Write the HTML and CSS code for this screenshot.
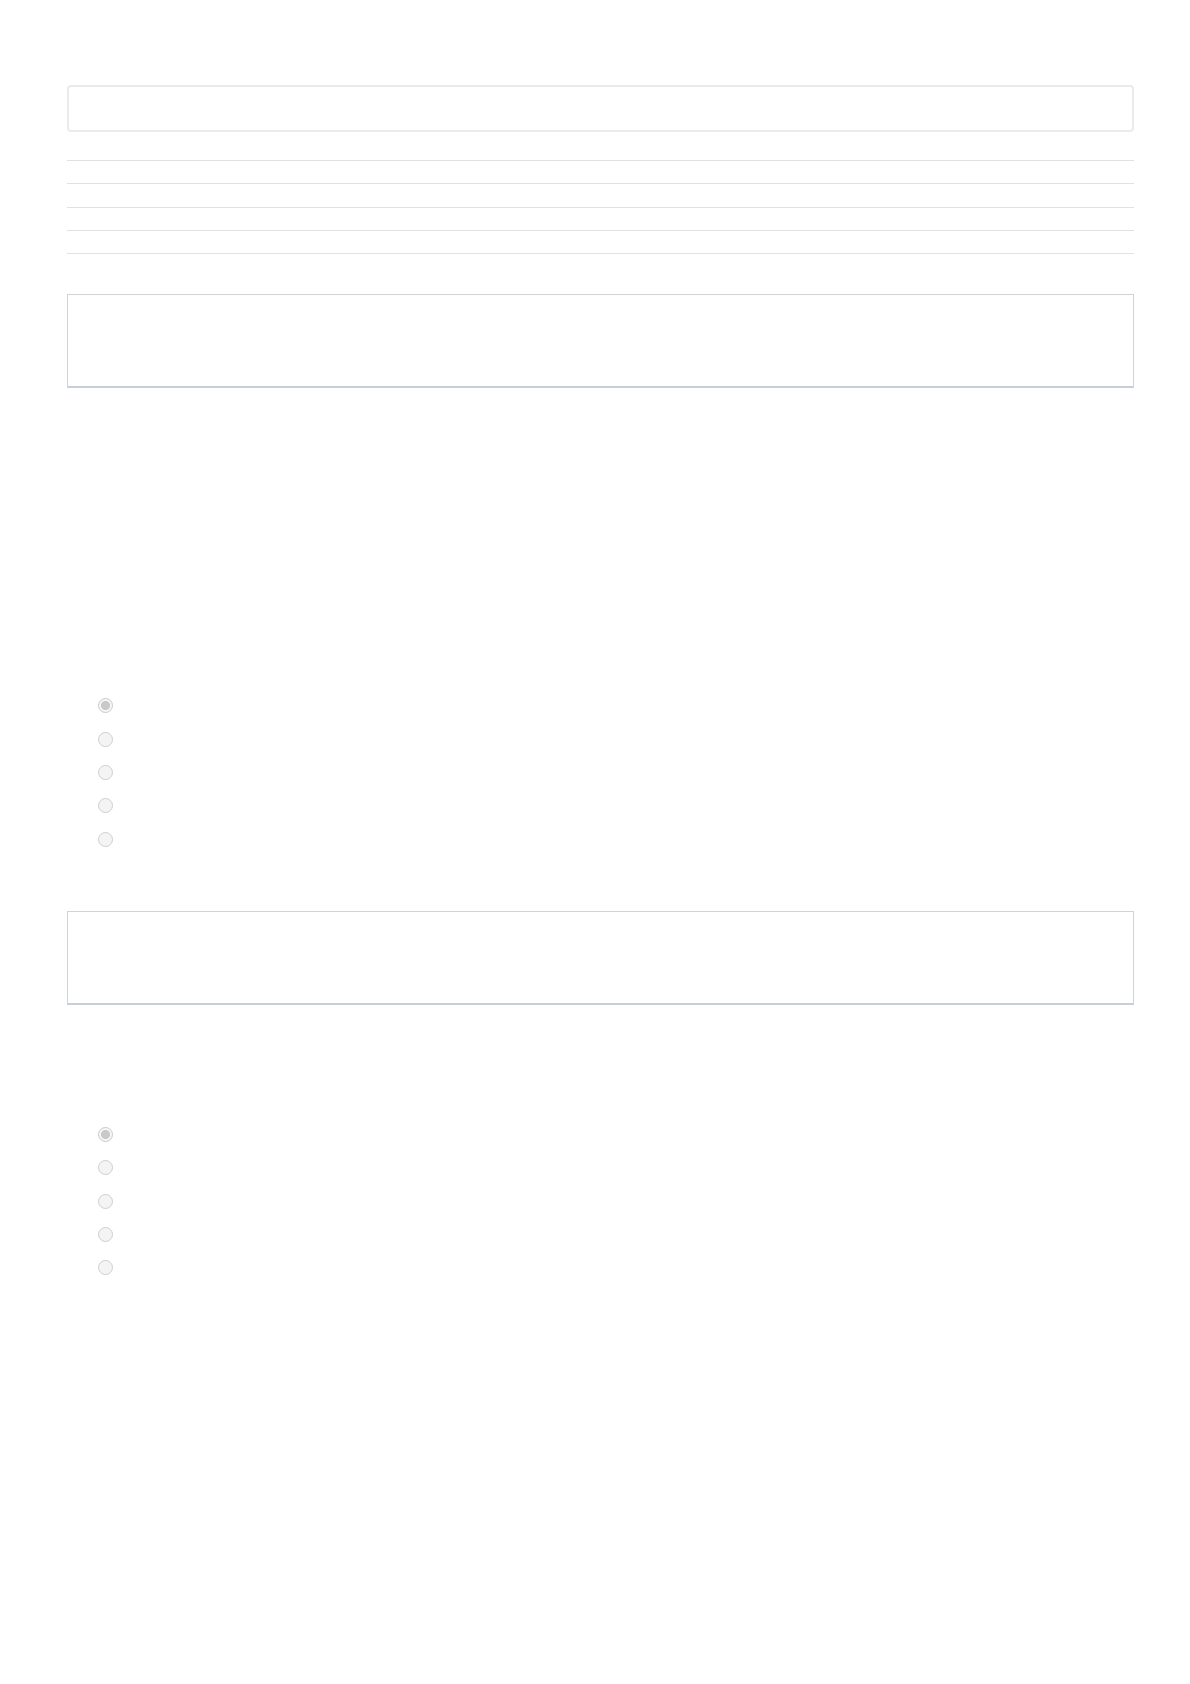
FILE: index.html
```html
<!doctype html>
<html>

<head>
    <meta charset="utf-8">
    <title>form</title>
    <link rel="stylesheet" href="styles.css">
</head>

<body>
    <div class="page">
        <div class="search"></div>

        <ul class="rows">
            <li></li>
            <li></li>
            <li></li>
            <li></li>
        </ul>

        <div class="panel panel-first"></div>

        <ul class="choices choices-first">
            <li><input type="radio" name="q1" checked disabled></li>
            <li><input type="radio" name="q1" disabled></li>
            <li><input type="radio" name="q1" disabled></li>
            <li><input type="radio" name="q1" disabled></li>
            <li><input type="radio" name="q1" disabled></li>
        </ul>

        <div class="panel panel-second"></div>

        <ul class="choices choices-second">
            <li><input type="radio" name="q2" checked disabled></li>
            <li><input type="radio" name="q2" disabled></li>
            <li><input type="radio" name="q2" disabled></li>
            <li><input type="radio" name="q2" disabled></li>
            <li><input type="radio" name="q2" disabled></li>
        </ul>
    </div>
</body>

</html>
```

FILE: styles.css
```css
* {
    margin: 0;
    padding: 0;
    box-sizing: border-box;
}

ol,
ul,
li {
    list-style: none;
}

body {
    background: #fff;
    font-family: "Liberation Sans", Arial, sans-serif;
}

.page {
    width: 1067px;
    margin-left: 67px;
    padding-top: 85px;
    padding-bottom: 100px;
}

.search {
    height: 47px;
    border: 2px solid #e9ebef;
    border-radius: 4px;
}

.rows {
    margin-top: 28px;
    border-bottom: 1px solid #e0e1e5;
}

.rows li {
    height: 23.33px;
    border-top: 1px solid #e0e1e5;
}

.panel {
    height: 94px;
    border: 1px solid #cfd3da;
    border-bottom: 2px solid #c9cdd5;
}

.panel-first {
    margin-top: 39.7px;
}

.panel-second {
    margin-top: 55px;
}

.choices {
    padding-left: 31px;
}

.choices-first {
    margin-top: 301.3px;
}

.choices-second {
    margin-top: 113px;
}

.choices li {
    height: 33.33px;
    display: flex;
    align-items: center;
}

.choices input {
    appearance: none;
    -webkit-appearance: none;
    width: 15px;
    height: 15px;
    margin: 0;
    border: 1.5px solid #cfcfcf;
    border-radius: 50%;
    background: #f4f4f4;
}

.choices input:checked {
    border-color: #cbcbcb;
    background: radial-gradient(circle, #c9c9c9 0 4.2px, #f6f6f6 4.8px);
}
```
